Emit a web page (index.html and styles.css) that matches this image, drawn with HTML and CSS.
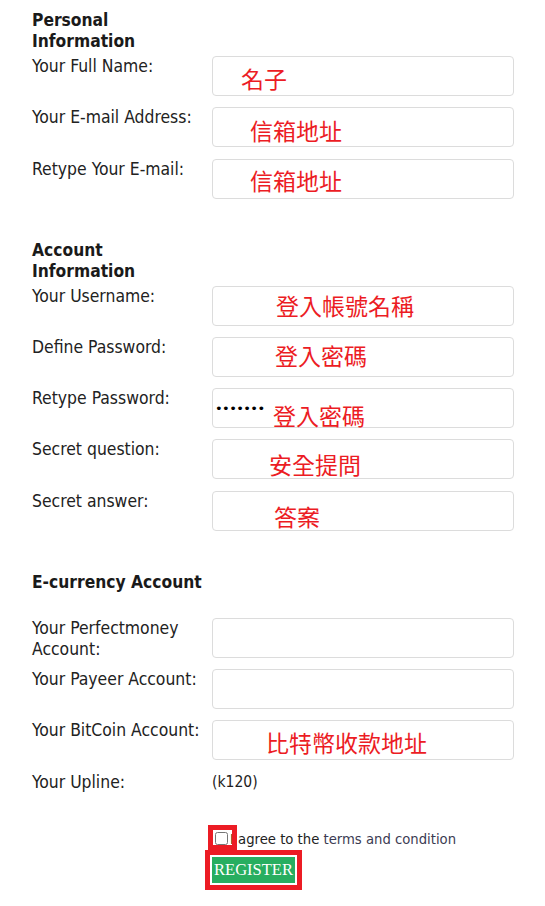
FILE: index.html
```html
<!DOCTYPE html>
<html lang="en">
<head>
    <meta charset="UTF-8">
    <meta name="viewport" content="width=device-width, initial-scale=1.0">
    <title>Register</title>
    <link rel="stylesheet" href="styles.css">
</head>
<body>
    <form class="register">
        <h2 class="section-title">Personal Information</h2>
        <div class="row">
            <label class="row-label">Your Full Name:</label>
            <div class="field"><span class="note note-name">名子</span></div>
        </div>
        <div class="row">
            <label class="row-label">Your E-mail Address:</label>
            <div class="field"><span class="note note-mail">信箱地址</span></div>
        </div>
        <div class="row">
            <label class="row-label">Retype Your E-mail:</label>
            <div class="field"><span class="note note-remail">信箱地址</span></div>
        </div>

        <h2 class="section-title spaced">Account Information</h2>
        <div class="row">
            <label class="row-label">Your Username:</label>
            <div class="field"><span class="note note-user">登入帳號名稱</span></div>
        </div>
        <div class="row">
            <label class="row-label">Define Password:</label>
            <div class="field"><span class="note note-pass">登入密碼</span></div>
        </div>
        <div class="row">
            <label class="row-label">Retype Password:</label>
            <div class="field">
                <span class="dots">&#8226;&#8226;&#8226;&#8226;&#8226;&#8226;&#8226;</span>
                <span class="note note-repass">登入密碼</span>
            </div>
        </div>
        <div class="row">
            <label class="row-label">Secret question:</label>
            <div class="field"><span class="note note-question">安全提問</span></div>
        </div>
        <div class="row">
            <label class="row-label">Secret answer:</label>
            <div class="field"><span class="note note-answer">答案</span></div>
        </div>

        <h2 class="section-title spaced wide">E-currency Account</h2>
        <div class="row">
            <label class="row-label">Your Perfectmoney Account:</label>
            <div class="field"></div>
        </div>
        <div class="row">
            <label class="row-label">Your Payeer Account:</label>
            <div class="field"></div>
        </div>
        <div class="row">
            <label class="row-label">Your BitCoin Account:</label>
            <div class="field"><span class="note note-coin">比特幣收款地址</span></div>
        </div>
        <div class="row">
            <label class="row-label">Your Upline:</label>
            <span class="upline">(k120)</span>
        </div>

        <div class="agree">
            <input type="checkbox" class="agree-box">
            <span>I agree to the <a href="#" class="terms">terms and condition</a></span>
        </div>
        <div class="submit-frame">
            <button type="button" class="submit">REGISTER</button>
        </div>
    </form>
</body>
</html>
```

FILE: styles.css
```css
/* CSS */
:root {
    --text-color: #222222;
    --note-color: #ec1c24;
    --border-color: #dcdcdc;
    --button-color: #27ae60;
}

body {
    margin: 0;
    padding: 0;
    background-color: #FFFFFF;
    color: var(--text-color);
    font-family: "DejaVu Sans Condensed", "DejaVu Sans", sans-serif;
}

.register {
    padding: 10px 31px 20px 32px;
}

.section-title {
    width: 175px;
    margin: 0 0 4px;
    font-size: 17.3px;
    line-height: 21px;
    font-weight: bold;
    color: #1a1a1a;
}

.section-title.spaced {
    margin-top: 41px;
}

.section-title.wide {
    width: auto;
    margin-bottom: 25px;
}

.row {
    display: flex;
    margin-bottom: 11.3px;
}

.row-label {
    width: 180px;
    height: 40px;
    flex-shrink: 0;
    font-size: 17.4px;
    line-height: 21.5px;
}

.field {
    width: 302px;
    height: 40px;
    box-sizing: border-box;
    border: 1px solid var(--border-color);
    border-radius: 4px;
    display: flex;
    align-items: flex-start;
}

.note {
    color: var(--note-color);
    font-family: "Noto Sans CJK TC", sans-serif;
    font-size: 23px;
    line-height: 23px;
}

.note-name { margin: 10px 0 0 28px; }
.note-mail { margin: 11px 0 0 37px; }
.note-remail { margin: 9px 0 0 37px; }
.note-user { margin: 7px 0 0 63px; }
.note-pass { margin: 6px 0 0 62px; }
.note-repass { margin: 15px 0 0 10px; }
.note-question { margin: 13px 0 0 56px; }
.note-answer { margin: 13px 0 0 61px; }
.note-coin { margin: 10px 0 0 53px; }

.dots {
    width: 48px;
    margin: 13px 0 0 2px;
    font-family: "DejaVu Sans", sans-serif;
    font-size: 13px;
    line-height: 13px;
    letter-spacing: -0.6px;
    color: #000000;
}

.upline {
    margin-top: 1px;
    font-size: 15.5px;
    line-height: 19px;
}

.agree {
    position: relative;
    display: flex;
    align-items: center;
    height: 25px;
    margin: 13px 0 0 176px;
    font-size: 14.7px;
    color: var(--text-color);
}

.agree::before {
    content: "";
    position: absolute;
    left: 0;
    top: 0;
    width: 29px;
    height: 25px;
    box-sizing: border-box;
    border: 5px solid var(--note-color);
}

.agree-box {
    width: 13px;
    height: 13px;
    margin: 3px 2px 0 7px;
}

.agree span {
    padding-top: 3px;
}

.terms {
    color: #3b3b52;
    text-decoration: none;
}

.submit-frame {
    display: inline-block;
    margin-left: 173px;
    border: 5px solid var(--note-color);
    padding: 2px;
}

.submit {
    display: block;
    width: 83px;
    height: 26px;
    padding: 0;
    border: none;
    background-color: var(--button-color);
    color: #FFFFFF;
    font-family: "Liberation Serif", serif;
    font-size: 16.5px;
    cursor: pointer;
}
```
